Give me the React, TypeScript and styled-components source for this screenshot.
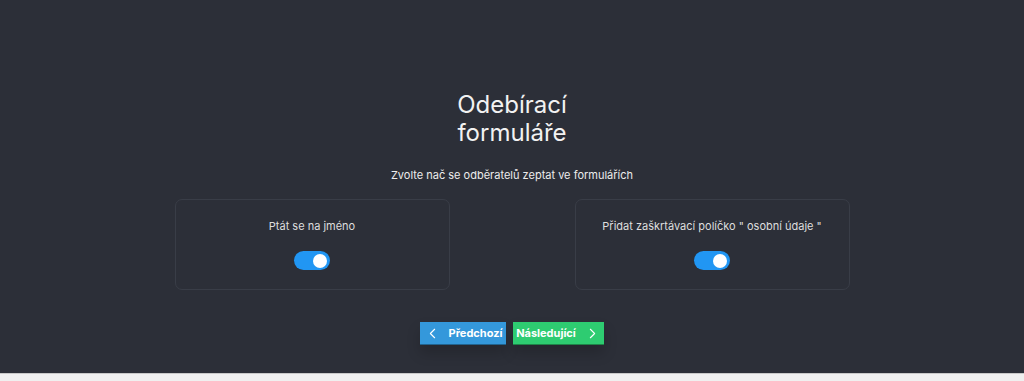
import React from 'react';
import styled, { createGlobalStyle } from 'styled-components';
import { ChevronLeft, ChevronRight } from 'lucide-react';

const GlobalStyle = createGlobalStyle`
  html, body {
    margin: 0;
    padding: 0;
    background: #f0f0f0;
    font-family: Inter, 'Noto Sans', sans-serif;
  }
`;

const Page = styled.div`
  height: 374px;
  background: #2c2f38;
  border-bottom: 1px solid #c9c9c9;
  display: flex;
  flex-direction: column;
  align-items: center;
  padding-top: 91px;
  box-sizing: border-box;
`;

const Title = styled.h1`
  margin: 0;
  width: 160px;
  text-align: center;
  font-size: 24px;
  line-height: 28px;
  font-weight: 400;
  color: #f2f2f2;
`;

const Subtitle = styled.p`
  margin: 20px 0 0;
  font-size: 11px;
  line-height: 16px;
  color: #ececec;
`;

const Cards = styled.div`
  display: flex;
  gap: 125px;
  margin-top: 16px;
`;

const Card = styled.div`
  width: 275px;
  height: 91px;
  box-sizing: border-box;
  border: 1px solid #393d47;
  border-radius: 7px;
  display: flex;
  flex-direction: column;
  align-items: center;
  padding-top: 18px;
`;

const Label = styled.span`
  font-size: 11px;
  line-height: 16px;
  color: #dedede;
`;

const Switch = styled.div<{ $on: boolean }>`
  margin-top: 17px;
  width: 36px;
  height: 19px;
  border-radius: 10px;
  background: ${(p) => (p.$on ? '#2196f3' : '#555')};
  display: flex;
  align-items: center;
  justify-content: ${(p) => (p.$on ? 'flex-end' : 'flex-start')};
  padding: 0 3px;
  box-sizing: border-box;
`;

const Knob = styled.div`
  width: 14px;
  height: 14px;
  border-radius: 50%;
  background: #fff;
`;

const Buttons = styled.div`
  display: flex;
  gap: 7px;
  margin-top: 32px;
`;

const Button = styled.button<{ $color: string; $w: number }>`
  width: ${(p) => p.$w}px;
  height: 23px;
  border: none;
  border-bottom: 1px solid rgba(0, 0, 0, 0.35);
  background: ${(p) => p.$color};
  color: #fff;
  font-family: Inter, 'Noto Sans', sans-serif;
  font-weight: 700;
  font-size: 11px;
  display: flex;
  align-items: center;
  justify-content: center;
  gap: 8px;
  padding: 0;
  box-shadow: 0 8px 14px rgba(0, 0, 0, 0.18);
  cursor: pointer;
`;

export default function App() {
  return (
    <>
      <GlobalStyle />
      <Page>
        <Title>Odebírací formuláře</Title>
        <Subtitle>Zvolte nač se odběratelů zeptat ve formulářích</Subtitle>
        <Cards>
          <Card>
            <Label>Ptát se na jméno</Label>
            <Switch $on>
              <Knob />
            </Switch>
          </Card>
          <Card>
            <Label>Přidat zaškrtávací políčko " osobní údaje "</Label>
            <Switch $on>
              <Knob />
            </Switch>
          </Card>
        </Cards>
        <Buttons>
          <Button $color="#3498db" $w={86}>
            <ChevronLeft size={17} strokeWidth={1.5} />
            Předchozí
          </Button>
          <Button $color="#2ecc71" $w={91}>
            Následující
            <ChevronRight size={17} strokeWidth={1.5} />
          </Button>
        </Buttons>
      </Page>
    </>
  );
}
